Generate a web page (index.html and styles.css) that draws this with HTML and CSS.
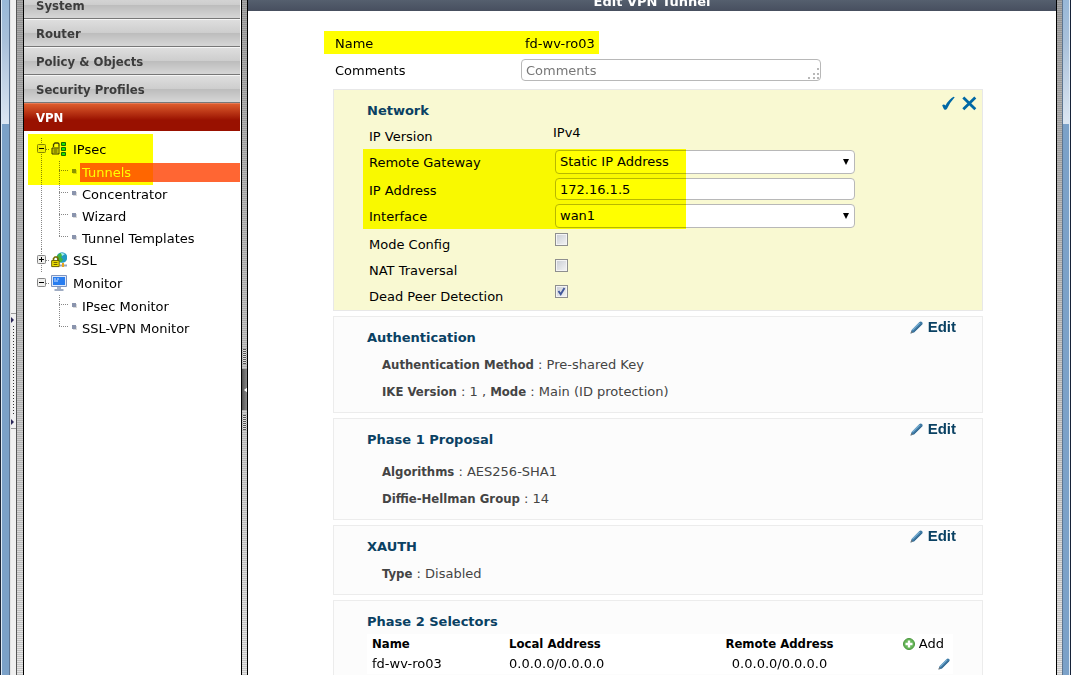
FILE: index.html
```html
<!DOCTYPE html>
<html lang="en">
<head>
<meta charset="utf-8">
<meta name="viewport" content="width=device-width, initial-scale=1">
<title>Edit VPN Tunnel</title>
<link rel="stylesheet" href="styles.css">
</head>
<body>
<svg width="0" height="0" class="sprites" aria-hidden="true">
  <symbol id="pencil" viewBox="0 0 13 13">
    <path d="M.5 12.5 1.6 8.9 9.4 1.1a1.8 1.8 0 0 1 2.600 2.600L4.1 11.600Z" fill="#3f7aa4"/>
    <path d="M2.4 9.2 9.8 1.8" stroke="#7db3d6" stroke-width="1.2"/>
    <path d="M4 10.8 11.6 3.2" stroke="#2d5f86" stroke-width=".8"/>
    <path d="M.5 12.5 1.3 10l1.6 1.7Z" fill="#777"/>
  </symbol>
  <symbol id="minus" viewBox="0 0 9 9">
    <rect x=".5" y=".5" width="8" height="8" rx=".8" fill="#f0f0ee" stroke="#868686"/><path d="M2 4.5h5" stroke="#000"/>
  </symbol>
  <symbol id="plus" viewBox="0 0 9 9">
    <rect x=".5" y=".5" width="8" height="8" rx=".8" fill="#f0f0ee" stroke="#868686"/><path d="M2 4.5h5M4.500 2v5" stroke="#000"/>
  </symbol>
</svg>
<div class="app">
  <div class="frame frame-left"></div>
  <div class="dock">
    <i class="dock-line"></i><i class="dock-arrow"></i><i class="dock-dots"></i><i class="dock-arrow"></i><i class="dock-line"></i>
  </div>
  <div class="stripes stripes-left"></div>

  <nav class="sidebar">
    <div class="menu">
      <button type="button">System</button>
      <button type="button">Router</button>
      <button type="button">Policy &amp; Objects</button>
      <button type="button">Security Profiles</button>
      <button type="button" class="active">VPN</button>
    </div>
    <ul class="tree">
      <li class="group marker-tree">
        <div class="parent">
          <svg class="toggle"><use href="#minus"/></svg><i class="branch"></i>
          <svg class="tree-icon" viewBox="0 0 16 16">
            <path d="M2.500 6V3.500L4 2h3l1 1v4" fill="none" stroke="#444" stroke-width="1.300"/>
            <path d="M1 7h7v6H1z" fill="#ddd" stroke="#333"/><path d="M2.500 9h4M2.500 11h4" stroke="#444"/><path d="M8 5v7" stroke="#aaa"/>
            <path d="M10.500 1.500h4v3h-4zM10.500 6.500h4v3h-4zM10.500 11.500h4v3h-4z" fill="#19e32d" stroke="#176c16"/>
          </svg>
          <a href="#ipsec">IPsec</a>
        </div>
        <ul class="children">
          <li><i class="branch"></i><i class="bullet"></i><a href="#tunnels" class="selected">Tunnels</a></li>
          <li><i class="branch"></i><i class="bullet"></i><a href="#concentrator">Concentrator</a></li>
          <li><i class="branch"></i><i class="bullet"></i><a href="#wizard">Wizard</a></li>
          <li><i class="branch"></i><i class="bullet"></i><a href="#templates">Tunnel Templates</a></li>
        </ul>
      </li>
      <li class="group">
        <div class="parent">
          <svg class="toggle"><use href="#plus"/></svg><i class="branch"></i>
          <svg class="tree-icon" viewBox="0 0 16 16">
            <circle cx="11" cy="5.500" r="5.300" fill="#239ac4"/>
            <path d="M7 2.500 10 1l2 1.500-2 2.500 2 2.500-2 3L7 8.500 5.800 5Z" fill="#40b540"/><path d="M10 .8 14 2l-3 2Z" fill="#a8f0ee"/>
            <path d="M9 13.500h7" stroke="#98a7b8" stroke-width="2"/><path d="M12 11v4" stroke="#e7a51c" stroke-width="2"/>
            <path d="M2.500 9V6.500L4 5h2l1 1.500V9" fill="none" stroke="#766b00" stroke-width="1.600"/>
            <path d="M.7 8.600h7.500v6H.7z" fill="#f4e500" stroke="#695f00"/><path d="M2.500 10.600h4M2.500 12.500h4" stroke="#6d6100"/>
          </svg>
          <a href="#ssl">SSL</a>
        </div>
      </li>
      <li class="group last">
        <div class="parent">
          <svg class="toggle"><use href="#minus"/></svg><i class="branch"></i>
          <svg class="tree-icon" viewBox="0 0 16 16">
            <path d="M.5.5h15v11H.500z" fill="#dfe9f9" stroke="#7e94bf"/><path d="M2 2h12v8H2z" fill="#287df0"/>
            <path d="M3 4h2M6 4h2M3 6h4" stroke="#cfe3ff"/><path d="M6 12h4v2H6z" fill="#a5b2c9"/><path d="M3.500 15h9" stroke="#8797b4" stroke-width="1.600"/>
          </svg>
          <a href="#monitor">Monitor</a>
        </div>
        <ul class="children">
          <li><i class="branch"></i><i class="bullet"></i><a href="#ipsec-monitor">IPsec Monitor</a></li>
          <li><i class="branch"></i><i class="bullet"></i><a href="#ssl-monitor">SSL-VPN Monitor</a></li>
        </ul>
      </li>
    </ul>
  </nav>

  <div class="stripes splitter">
    <i class="grip"></i>
    <button type="button" class="handle" aria-label="Collapse menu"><svg viewBox="0 0 4 6"><path d="M4 0 0 3l4 3Z" fill="#fff"/></svg></button>
    <i class="grip"></i>
  </div>

  <main class="main">
    <header class="titlebar"><h1>Edit VPN Tunnel</h1></header>
    <form class="form">
      <div class="basic name-row"><span>Name</span><span class="name-value">fd-wv-ro03</span></div>
      <div class="basic comments-row">
        <label for="comments">Comments</label>
        <div class="field">
          <textarea id="comments" rows="1" placeholder="Comments"></textarea>
          <svg class="resizer" viewBox="0 0 12 12"><path d="M9 0h2v2H9zM5 5h2v2H5zM9 5h2v2H9zM0 9h2v2H0zM5 9h2v2H5zM9 9h2v2H9z" fill="#b8b8b8"/></svg>
        </div>
      </div>

      <section class="panel network">
        <h2>Network</h2>
        <div class="actions">
          <button type="button" aria-label="Apply"><svg viewBox="0 0 15 15"><path d="M1.200 9.300Q2.700 7.400 4.500 9.500 8 3.200 12.500.8l1.200.4Q9.200 6 6 12.800q-1.300 1.800-3 .4Q1.900 11.500 1.200 9.300Z" fill="#0068a5"/></svg></button>
          <button type="button" aria-label="Cancel"><svg viewBox="0 0 15 15"><path d="m1.300 1.500 12 11.800M13.300 1.500 1.300 13.300" stroke="#0068a5" stroke-width="2.800"/></svg></button>
        </div>
        <div class="row"><span>IP Version</span><span class="plain">IPv4</span></div>
        <div class="marked">
          <div class="row row-select">
            <label for="gateway">Remote Gateway</label>
            <div class="field"><select id="gateway"><option>Static IP Address</option></select><svg class="arrow" viewBox="0 0 6 6"><path d="M0 0h6L3 6Z"/></svg></div>
          </div>
          <div class="row">
            <label for="address">IP Address</label>
            <div class="field"><input id="address" type="text" value="172.16.1.5"></div>
          </div>
          <div class="row row-select">
            <label for="interface">Interface</label>
            <div class="field"><select id="interface"><option>wan1</option></select><svg class="arrow" viewBox="0 0 6 6"><path d="M0 0h6L3 6Z"/></svg></div>
          </div>
        </div>
        <div class="row"><label for="mode">Mode Config</label><span class="check"><input id="mode" type="checkbox"></span></div>
        <div class="row"><label for="nat">NAT Traversal</label><span class="check"><input id="nat" type="checkbox"></span></div>
        <div class="row"><label for="dpd">Dead Peer Detection</label><span class="check"><input id="dpd" type="checkbox" checked><svg viewBox="0 0 13 13"><path d="M3.500 6 5.700 9.300 9.500 3" fill="none" stroke="#42589b" stroke-width="1.900"/></svg></span></div>
      </section>

      <section class="panel">
        <h2>Authentication</h2>
        <button type="button" class="edit"><svg><use href="#pencil"/></svg>Edit</button>
        <p><b>Authentication Method</b> : Pre-shared Key</p>
        <p><b>IKE Version</b> : 1 , <b>Mode</b> : Main (ID protection)</p>
      </section>

      <section class="panel spaced">
        <h2>Phase 1 Proposal</h2>
        <button type="button" class="edit"><svg><use href="#pencil"/></svg>Edit</button>
        <p><b>Algorithms</b> : AES256-SHA1</p>
        <p><b>Diffie-Hellman Group</b> : 14</p>
      </section>

      <section class="panel">
        <h2>XAUTH</h2>
        <button type="button" class="edit"><svg><use href="#pencil"/></svg>Edit</button>
        <p><b>Type</b> : Disabled</p>
      </section>

      <section class="panel selectors">
        <h2>Phase 2 Selectors</h2>
        <table>
          <colgroup><col class="col-name"><col class="col-local"><col class="col-remote"><col></colgroup>
          <thead><tr><th>Name</th><th>Local Address</th><th class="center">Remote Address</th>
            <td class="tools add-cell"><button type="button"><svg viewBox="0 0 12 12"><circle cx="6" cy="6" r="5.500" fill="#65b657" stroke="#4b963f"/><path d="M6 2.500v7M2.500 6h7" stroke="#fff" stroke-width="2.400"/></svg>Add</button></td></tr></thead>
          <tbody><tr><td>fd-wv-ro03</td><td>0.0.0.0/0.0.0.0</td><td class="center">0.0.0.0/0.0.0.0</td>
            <td class="tools"><button type="button" aria-label="Edit selector"><svg><use href="#pencil"/></svg></button></td></tr></tbody>
        </table>
      </section>
    </form>
  </main>
  <div class="stripes stripes-right"></div>
  <div class="frame frame-right"></div>
</div>
</body>
</html>
```

FILE: styles.css
```css
* { box-sizing: border-box; }
body {
  margin: 0;
  background: #fff;
  color: #000;
  font: 13px/20px "DejaVu Sans", sans-serif;
}
button, input, select, textarea { font: inherit; color: inherit; }
button { border: 0; padding: 0; background: none; }
a { color: inherit; text-decoration: none; }
ul { margin: 0; padding: 0; list-style: none; }
i, svg { display: block; flex: none; }
.sprites { position: absolute; }

.app { display: flex; height: 100vh; overflow: hidden; }

/* window frame */
.frame {
  flex: none;
  background: linear-gradient(#98b8d8 0, #a8c0da 40px, #dce6f2 124px, #7ba1c8 124px);
}
.frame-left { width: 11px; border-left: 1px solid #1c2638; border-right: 1px solid #e4e4e4; box-shadow: inset 1px 0 #dce9f5, inset -1px 0 #5c7594; }
.frame-right { width: 9px; border-left: 1px solid #5d7590; border-right: 1px solid #162238; box-shadow: inset -1px 0 #dce9f5; }
.dock {
  flex: none;
  display: flex;
  flex-direction: column;
  gap: 3px;
  width: 5px;
  padding-top: 313px;
  background: #f0f0f0;
}
.dock-line { height: 1px; background: #999; }
.dock-arrow { border-left: 3px solid #2c2859; border-top: 3px solid transparent; border-bottom: 3px solid transparent; width: 3px; }
.dock-dots { width: 1px; height: 90px; margin-left: 2px; background: repeating-linear-gradient(#333 0 1px, transparent 1px 3px); }

.stripes {
  flex: none;
  background:
    repeating-linear-gradient(rgba(0, 0, 0, .14) 0 1px, transparent 1px 2px),
    linear-gradient(#a8a8a8, #e6e6e6);
}
.stripes-left { width: 8px; border-left: 1px solid #555; border-right: 1px solid #000; }
.stripes-right { width: 6px; border-left: 1px solid #000; }
.splitter {
  display: flex;
  flex-direction: column;
  gap: 5px;
  width: 7px;
  padding-top: 349px;
  border: solid #000;
  border-width: 0 1px;
}
.grip { width: 3px; height: 15px; margin-left: 1px; background: repeating-linear-gradient(#555 0 1px, #ddd 1px 2px); }
.handle { display: flex; align-items: center; justify-content: flex-end; height: 41px; background: linear-gradient(90deg, #555, #888); }
.handle svg { width: 3px; height: 6px; }

/* sidebar */
.sidebar { flex: none; width: 217px; padding-right: 1px; background: #fff; }
.menu { display: flex; flex-direction: column; margin-top: -9px; }
.menu button {
  height: 28px;
  padding: 2px 12px 0;
  border-top: 1px solid #f5f5f5;
  border-bottom: 1px solid #777;
  background: linear-gradient(#dedede, #cdcdcd 50%, #bcbcbc 50%, #d6d6d6);
  color: #3c3c3c;
  font-family: "DejaVu Sans Condensed", "DejaVu Sans", sans-serif;
  font-weight: bold;
  text-align: left;
}
.menu .active {
  padding-top: 0;
  border-color: #e87a55 transparent transparent;
  border-bottom: 0;
  background: linear-gradient(#dd5c2c, #991100 60%);
  color: #fff;
}
.tree { padding: 7px 0 0 13px; }
.group { position: relative; }
.group:not(.last) { background: repeating-linear-gradient(#888 0 1px, transparent 1px 2px) 4px 0 / 1px 100% no-repeat; }
.parent { display: flex; align-items: center; height: 23px; }
.toggle { width: 9px; height: 9px; margin-bottom: 3px; }
.branch { width: 4px; height: 1px; background: repeating-linear-gradient(90deg, #888 0 1px, transparent 1px 2px); }
.tree-icon { width: 16px; height: 16px; margin: 0 6px 2px 1px; }
.children {
  margin-left: 22px;
  background: repeating-linear-gradient(#888 0 1px, transparent 1px 2px) 0 0 / 1px calc(100% - 13px) no-repeat;
}
.children li { display: flex; align-items: center; height: 22px; }
.children .branch { width: 9px; margin-bottom: 3px; }
.bullet { width: 4px; height: 4px; margin: 0 4px 3px; background: #8a94ad; box-shadow: 1px 1px #d9d9d9; }
.children a { flex: 1; padding-left: 2px; line-height: 19px; }
.selected { background: #ff6633; color: #fff; }

/* highlighter strokes lie over the text and tint it */
.marker-tree::after, .name-row::after, .marked::after {
  content: "";
  position: absolute;
  background: #ff0;
  mix-blend-mode: multiply;
  pointer-events: none;
}
.marker-tree::after { left: -9px; top: -4px; width: 125px; height: 51px; }
.name-row::after { left: -9px; top: 0; width: 275px; height: 23px; }
.marked::after { left: -6px; top: 0; bottom: 2px; width: 323px; }

/* main area */
.main { flex: 1; min-width: 0; background: #fff; }
.titlebar {
  display: flex;
  align-items: flex-end;
  justify-content: center;
  height: 11px;
  overflow: hidden;
  background: linear-gradient(#555f6e, #474f5f);
  color: #fff;
}
h1 { margin: 0; font-size: 13px; line-height: 18px; }
.form { display: flex; flex-direction: column; gap: 5px; padding: 20px 73px 0 85px; }
.basic { position: relative; display: grid; padding-left: 2px; line-height: 24px; }
.name-row { grid-template-columns: 188px 1fr; height: 23px; padding-top: 1px; }
.name-row .name-value { padding-left: 2px; }
.comments-row { grid-template-columns: 186px minmax(0, 300px); height: 25px; }
.field { position: relative; }
textarea, input[type="text"], select {
  display: block;
  width: 100%;
  height: 22px;
  padding: 0 4px;
  border: 1px solid #b8b8b8;
  border-radius: 4px;
  background: #fff;
  appearance: none;
}
textarea { resize: none; overflow: hidden; padding-top: 1px; line-height: 20px; }
textarea::placeholder { color: #777; }
input[type="text"] { padding-top: 1px; }
select { height: 24px; line-height: 22px; }
.resizer { position: absolute; right: 1px; bottom: 4px; width: 12px; height: 12px; }
.arrow { position: absolute; right: 6px; top: 10px; width: 6px; height: 6px; }

.panel { position: relative; padding: 11px 29px 7px 33px; border: 1px solid #ececec; background: #fcfcfc; }
h2 { margin: 0 0 3px; font-size: 13px; line-height: 20px; color: #0a4163; }
.spaced h2 { margin-bottom: 8px; }
.panel p { margin: 0 0 0 15px; line-height: 27px; color: #444; }
.panel b, th { font-family: "DejaVu Sans Condensed", "DejaVu Sans", sans-serif; }
.edit {
  position: absolute;
  top: 0;
  right: 26px;
  display: flex;
  align-items: center;
  gap: 5px;
  color: #0a4163;
  font: bold 15px/20px "Liberation Sans", sans-serif;
}
.edit svg { width: 13px; height: 13px; }
.network { padding-bottom: 1px; background: #f9f9d2; border-color: #e8e8e8; }
.network h2 { margin-bottom: 2px; }
.actions { position: absolute; top: 6px; right: 5px; display: flex; gap: 6px; }
.actions svg { width: 15px; height: 15px; }
.marked { position: relative; }
.marked, .network > .row { margin-left: 2px; }
.row { display: grid; grid-template-columns: 186px minmax(0, 300px); height: 26px; line-height: 28px; }
.row-select { height: 28px; }
.row .field { padding-top: 1px; }
.row .plain { margin-left: -2px; line-height: 20px; }
.check { position: relative; padding-top: 2px; }
.check input {
  display: block;
  width: 13px;
  height: 13px;
  margin: 0;
  border: 1px solid #8e8f8f;
  background: linear-gradient(135deg, #c8ccd4, #f5f5f5);
  box-shadow: inset 0 0 0 1px #f4f4f4;
  appearance: none;
}
.check svg { position: absolute; left: 0; top: 2px; width: 13px; height: 13px; pointer-events: none; }

.selectors h2 { margin-bottom: 2px; }
table { width: 100%; border-spacing: 0; background: #fff; table-layout: fixed; }
th, td { height: 20px; padding: 0 0 0 5px; text-align: left; line-height: 20px; }
.col-name { width: 137px; }
.col-local { width: 200px; }
.col-remote { width: 151px; }
.center { padding: 0; text-align: center; }
.tools { padding-right: 3px; }
.tools button { display: flex; align-items: center; gap: 4px; margin-left: auto; }
.tools svg { width: 12px; height: 12px; }
.add-cell { padding-right: 9px; }
```
